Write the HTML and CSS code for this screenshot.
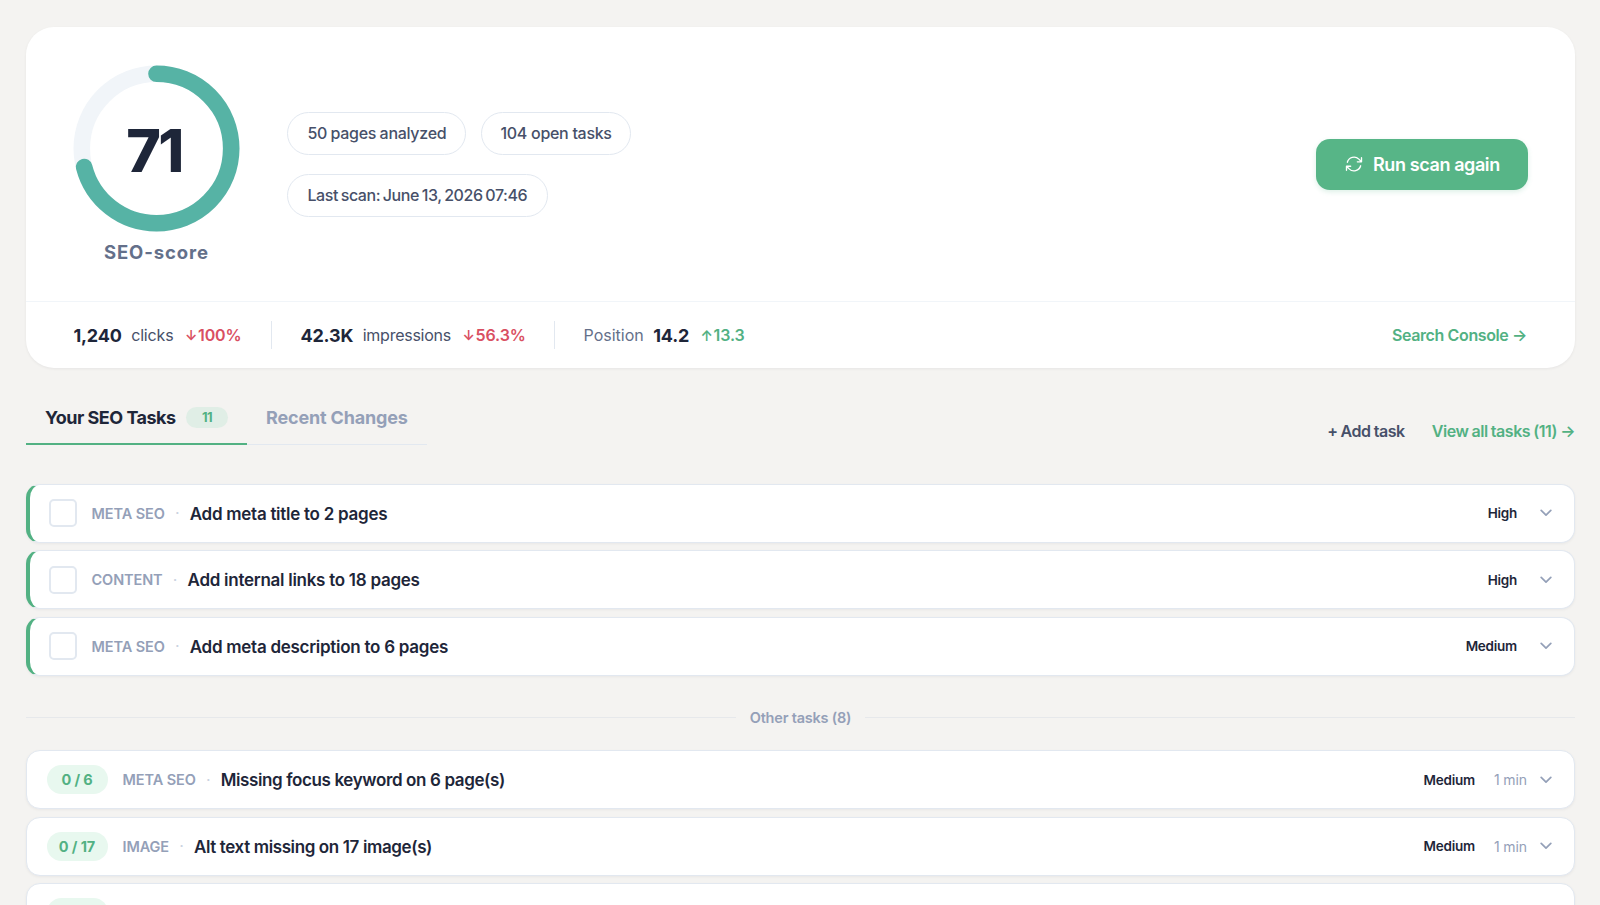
FILE: index.html
```
<!DOCTYPE html>
<html lang="en">
  <head>
    <meta charset="UTF-8" />
    <meta name="viewport" content="width=device-width, initial-scale=1.0" />
    <title>SEO Dashboard</title>
    <link rel="stylesheet" href="styles.css">
  </head>
  <body>
    <main>
      <section class="summary">
        <div class="summary-top">
          <div class="score">
            <div class="ring">
              <svg width="166" height="166" viewBox="0 0 166 166" fill="none">
                <circle class="ring-track" cx="82.5" cy="82.5" r="74.7" />
                <circle class="ring-value" cx="82.5" cy="82.5" r="74.7" pathLength="100" transform="rotate(-90 82.5 82.5)" />
              </svg>
              <span class="ring-number">71</span>
            </div>
            <p class="score-label">SEO-score</p>
          </div>
          <div class="pills">
            <span class="pill pages">50 pages analyzed</span>
            <span class="pill open">104 open tasks</span>
            <span class="pill last">Last scan: June 13, 2026 07:46</span>
          </div>
          <button class="scan">
            <svg width="20" height="20" viewBox="0 0 24 24" fill="none" stroke="currentColor" stroke-width="1.6" stroke-linecap="round" stroke-linejoin="round">
              <path d="M16.02 9.35h4.99V4.36M2.99 19.64v-4.99h4.99M2.99 14.65l3.18 3.18a8.25 8.25 0 0 0 13.8-3.7M4.03 9.87a8.25 8.25 0 0 1 13.8-3.7l3.18 3.18" />
            </svg>
            <span>Run scan again</span>
          </button>
        </div>
        <div class="stats">
          <div class="stat clicks">
            <strong>1,240</strong>
            <span class="stat-name">clicks</span>
            <span class="change down"><i>↓</i>100%</span>
          </div>
          <div class="stat impressions">
            <strong>42.3K</strong>
            <span class="stat-name">impressions</span>
            <span class="change down"><i>↓</i>56.3%</span>
          </div>
          <div class="stat position">
            <span class="stat-name">Position</span>
            <strong>14.2</strong>
            <span class="change up"><i>↑</i>13.3</span>
          </div>
          <a class="console">Search Console <i>→</i></a>
        </div>
      </section>

      <div class="toolbar">
        <nav class="tabs">
          <a class="tab active"><span>Your SEO Tasks</span> <span class="count">11</span></a>
          <a class="tab"><span>Recent Changes</span></a>
        </nav>
        <div class="actions">
          <a class="add">+ Add task</a>
          <a class="view">View all tasks (11) <i>→</i></a>
        </div>
      </div>

      <section class="tasks">
        <article class="task top">
          <span class="check"></span>
          <span class="type">META SEO</span>
          <span class="dot">·</span>
          <h3>Add meta title to 2 pages</h3>
          <span class="priority">High</span>
          <svg class="chevron" width="12" height="8" viewBox="0 0 12 8"><path d="M1.2 1.4 6 6.2l4.8-4.8" /></svg>
        </article>
        <article class="task top">
          <span class="check"></span>
          <span class="type">CONTENT</span>
          <span class="dot">·</span>
          <h3>Add internal links to 18 pages</h3>
          <span class="priority">High</span>
          <svg class="chevron" width="12" height="8" viewBox="0 0 12 8"><path d="M1.2 1.4 6 6.2l4.8-4.8" /></svg>
        </article>
        <article class="task top">
          <span class="check"></span>
          <span class="type">META SEO</span>
          <span class="dot">·</span>
          <h3>Add meta description to 6 pages</h3>
          <span class="priority">Medium</span>
          <svg class="chevron" width="12" height="8" viewBox="0 0 12 8"><path d="M1.2 1.4 6 6.2l4.8-4.8" /></svg>
        </article>
      </section>

      <div class="divider"><span>Other tasks (8)</span></div>

      <section class="tasks other">
        <article class="task">
          <span class="progress">0 / 6</span>
          <span class="type">META SEO</span>
          <span class="dot">·</span>
          <h3>Missing focus keyword on 6 page(s)</h3>
          <span class="priority">Medium</span>
          <span class="time">1 min</span>
          <svg class="chevron" width="12" height="8" viewBox="0 0 12 8"><path d="M1.2 1.4 6 6.2l4.8-4.8" /></svg>
        </article>
        <article class="task">
          <span class="progress">0 / 17</span>
          <span class="type">IMAGE</span>
          <span class="dot">·</span>
          <h3>Alt text missing on 17 image(s)</h3>
          <span class="priority">Medium</span>
          <span class="time">1 min</span>
          <svg class="chevron" width="12" height="8" viewBox="0 0 12 8"><path d="M1.2 1.4 6 6.2l4.8-4.8" /></svg>
        </article>
        <article class="task">
          <span class="progress"></span>
        </article>
      </section>
    </main>
  </body>
</html>
```
FILE: styles.css
```
* {
  box-sizing: border-box;
}
body {
  margin: 0;
  height: 905px;
  overflow: hidden;
  font-family: "Inter", sans-serif;
  color: #1e2639;
  background-color: #f4f3f1;
}
main {
  padding: 27px 25px 0 26px;
}
i {
  font-style: normal;
}
p,
h3 {
  margin: 0;
}
.summary {
  height: 341px;
  background-color: #fff;
  border-radius: 28px;
  box-shadow: 0 1px 3px rgba(15, 23, 42, 0.06);
}
.summary-top {
  display: flex;
  align-items: center;
  height: 274px;
  padding: 0 47px 0 47.5px;
}
.score {
  width: 166px;
  padding-top: 2px;
  text-align: center;
}
.ring {
  display: grid;
  place-items: center;
  height: 166px;
}
.ring svg,
.ring-number {
  grid-area: 1 / 1;
}
.ring svg {
  overflow: visible;
}
.ring circle {
  stroke-width: 16.6;
}
.ring-track {
  stroke: #f1f5f9;
}
.ring-value {
  stroke: #56b3a5;
  stroke-linecap: round;
  stroke-dasharray: 71 100;
}
.ring-number {
  font-size: 59px;
  font-weight: 800;
  letter-spacing: -2.5px;
  padding: 3px 5px 0 0;
}
.score-label {
  margin-top: 7px;
  font-size: 18.5px;
  line-height: 26px;
  font-weight: 700;
  letter-spacing: 0.9px;
  color: #64708a;
}
.pills {
  display: flex;
  flex-wrap: wrap;
  gap: 19px 14.5px;
  width: 400px;
  margin-left: 47.5px;
}
.pill {
  height: 43px;
  padding: 0 19px;
  border: 1px solid #e2e8f0;
  border-radius: 22px;
  font-size: 16px;
  line-height: 41px;
  font-weight: 500;
  letter-spacing: -0.3px;
  white-space: nowrap;
  color: #475069;
}
.pages {
  width: 179px;
  padding-left: 19.5px;
  word-spacing: -0.5px;
}
.open {
  width: 150.5px;
}
.last {
  width: 260.5px;
  padding-left: 19.5px;
  letter-spacing: -0.45px;
  word-spacing: -1px;
}
.scan {
  display: flex;
  align-items: center;
  gap: 9px;
  width: 212px;
  height: 51px;
  margin-left: auto;
  padding: 0 0 0 28px;
  border: none;
  border-radius: 14px;
  background-color: #57b587;
  box-shadow: 0 2px 5px rgba(87, 181, 135, 0.2);
  color: #fff;
  font-family: inherit;
  font-size: 18px;
  font-weight: 600;
  letter-spacing: -0.4px;
  white-space: nowrap;
}
.stats {
  display: flex;
  align-items: center;
  height: 67px;
  padding: 0 48px 0 47.5px;
  border-top: 1px solid #f1f5f9;
}
.stat {
  display: flex;
  align-items: center;
  gap: 9.5px;
  height: 28px;
  margin-right: 29px;
  border-right: 1px solid #e2e8f0;
  white-space: nowrap;
}
.stat.clicks {
  width: 198px;
}
.stat.impressions {
  width: 254px;
}
.stat.position {
  border: none;
}
.stat strong {
  font-size: 18px;
  font-weight: 700;
  letter-spacing: -0.2px;
}
.stat-name {
  font-size: 16px;
  letter-spacing: -0.15px;
  color: #475069;
}
.impressions .stat-name {
  letter-spacing: -0.25px;
}
.position .stat-name {
  letter-spacing: 0;
  color: #64708a;
}
.change {
  display: flex;
  align-items: center;
  margin-left: 2px;
  font-size: 16px;
  font-weight: 600;
  letter-spacing: -0.1px;
}
.change i {
  width: 13px;
  font-size: 14px;
}
.down {
  color: #d94f62;
}
.up {
  color: #52b183;
}
.console {
  margin-left: auto;
  font-size: 16px;
  font-weight: 600;
  letter-spacing: -0.38px;
  color: #52b183;
}
.toolbar {
  display: flex;
  justify-content: space-between;
  height: 77px;
}
.tabs {
  display: flex;
  align-items: flex-end;
}
.tab {
  display: flex;
  align-items: center;
  height: 54px;
  padding: 0 19px;
  border-bottom: 1px solid #e2e8f0;
  font-size: 18px;
  font-weight: 700;
  letter-spacing: -0.17px;
  white-space: nowrap;
  color: #94a0b8;
}
.tab.active {
  width: 221px;
  border-bottom: 2px solid #52b183;
  letter-spacing: -0.5px;
  color: #1e2639;
}
.count {
  width: 42px;
  height: 21px;
  margin-left: auto;
  border-radius: 11px;
  background-color: #e0eee6;
  font-size: 13px;
  line-height: 21px;
  text-align: center;
  color: #52b183;
}
.actions {
  display: flex;
  gap: 27px;
  padding-top: 52.5px;
  font-size: 16px;
  line-height: 20px;
  font-weight: 600;
  letter-spacing: -0.45px;
  word-spacing: -0.5px;
  white-space: nowrap;
  color: #475069;
}
.view {
  color: #52b183;
}
.tasks {
  display: flex;
  flex-direction: column;
  gap: 7.5px;
}
.toolbar + .tasks {
  margin-top: 38.5px;
}
.task {
  display: flex;
  align-items: center;
  height: 59px;
  padding: 0 22.5px 0 19.5px;
  border: 1px solid #e2e8f0;
  border-radius: 14px;
  background-color: #fff;
  box-shadow: 0 1px 3px rgba(15, 23, 42, 0.05);
  white-space: nowrap;
}
.task.top {
  padding-left: 19px;
  border-left: 4px solid #52b183;
}
.check {
  width: 28px;
  height: 28px;
  margin-right: 14.5px;
  border: 2px solid #e2e8f0;
  border-radius: 5px;
}
.type {
  font-size: 14.5px;
  font-weight: 600;
  letter-spacing: -0.1px;
  color: #94a0b8;
}
.dot {
  width: 25px;
  text-align: center;
  color: #cbd3df;
}
.task h3 {
  padding-top: 1px;
  font-size: 17px;
  font-weight: 600;
  letter-spacing: -0.27px;
}
.other h3 {
  letter-spacing: -0.38px;
}
.priority {
  margin-left: auto;
  font-size: 13.5px;
  font-weight: 600;
  letter-spacing: -0.25px;
}
.time {
  margin-left: 19px;
  font-size: 14px;
  letter-spacing: -0.1px;
  color: #94a0b8;
}
.chevron {
  margin-left: 22.5px;
  fill: none;
  stroke: #94a0b8;
  stroke-width: 1.7;
  stroke-linecap: round;
  stroke-linejoin: round;
}
.time + .chevron {
  margin-left: 12.5px;
}
.progress {
  width: 61px;
  height: 29px;
  margin-right: 15px;
  border-radius: 15px;
  background-color: #e8f8ef;
  font-size: 14.5px;
  line-height: 29px;
  font-weight: 700;
  letter-spacing: -0.1px;
  text-align: center;
  color: #52b183;
}
.divider {
  display: flex;
  align-items: center;
  gap: 14px;
  height: 74.5px;
  padding-top: 9.5px;
  font-size: 14.5px;
  font-weight: 600;
  letter-spacing: -0.2px;
  color: #94a0b8;
}
.divider::before,
.divider::after {
  content: "";
  flex: 1;
  height: 1px;
  background-color: #e6e8eb;
}
```
